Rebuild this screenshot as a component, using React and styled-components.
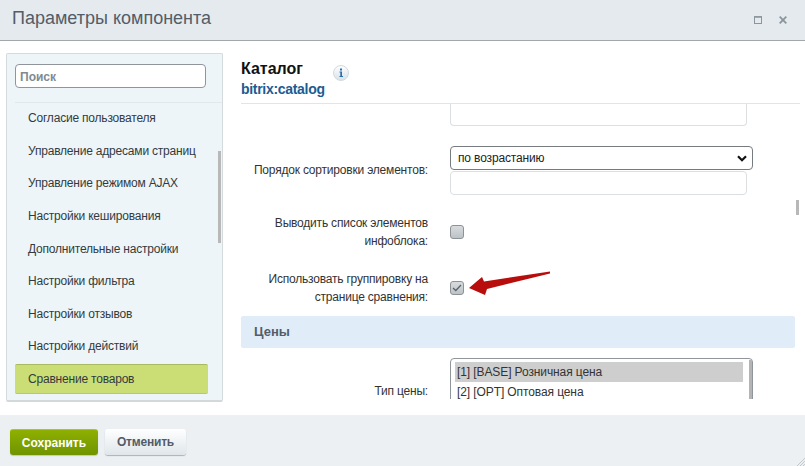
import React from "react";
import styled, { createGlobalStyle } from "styled-components";

const Global = createGlobalStyle`
  html, body { margin: 0; padding: 0; }
  body {
    width: 805px;
    height: 466px;
    overflow: hidden;
    background: #fff;
    font-family: "Liberation Sans", Arial, sans-serif;
  }
`;

const Dialog = styled.div`
  position: relative;
  width: 805px;
  height: 466px;
  display: flex;
  flex-direction: column;
`;

const Header = styled.header`
  height: 40px;
  flex: none;
  display: flex;
  align-items: center;
  padding: 0 18px 0 12px;
  background: #e4eaed;
  border-bottom: 1px solid #a3a7a9;
`;

const Title = styled.h1`
  flex: 1;
  margin: 0 0 3px;
  font-size: 18px;
  font-weight: normal;
  color: #535c69;
`;

const HeaderIcons = styled.div`
  display: flex;
  align-items: center;
  gap: 17px;
`;

const Body = styled.div`
  flex: 1;
  min-height: 0;
  display: flex;
  padding: 12px 5px 13px 6px;
`;

const Sidebar = styled.aside`
  position: relative;
  flex: none;
  width: 217px;
  height: 349px;
  padding: 10px 0 0 8px;
  background: #eef5f9;
  border: 1px solid #d5dadc;
  border-bottom: 2px solid #d3d8da;
  box-sizing: border-box;
  border-radius: 2px;
  overflow: hidden;
`;

const Search = styled.div`
  width: 191px;
  height: 24px;
  box-sizing: border-box;
  padding: 1px 0 0 4px;
  display: flex;
  align-items: center;
  background: #fff;
  border: 1px solid #8f959b;
  border-radius: 4px;
  font-size: 12px;
  font-weight: bold;
  color: #808a92;
`;

const SideLine = styled.div`
  height: 1px;
  margin: 14px 0 0 0;
  background: #e2e8eb;
`;

const SideList = styled.ul`
  list-style: none;
  margin: -1px 0 0;
  padding: 0;
`;

const SideItem = styled.li`
  width: 193px;
  height: ${(p) => (p.$active ? "30px" : "32.6px")};
  margin-top: ${(p) => (p.$active ? "1px" : "0")};
  box-sizing: border-box;
  padding-left: 13px;
  display: flex;
  align-items: center;
  font-size: 12px;
  letter-spacing: -0.2px;
  color: #333b40;
  background: ${(p) => (p.$active ? "#cbde75" : "transparent")};
  border-top: ${(p) => (p.$active ? "1px solid #a9b961" : "none")};
  border-bottom: ${(p) => (p.$active ? "1px solid #b8ca68" : "none")};
  border-radius: 2px;
`;

const SideThumb = styled.div`
  position: absolute;
  left: 211px;
  top: 97px;
  width: 3px;
  height: 92px;
  background: #b8b8b8;
`;

const Main = styled.main`
  position: relative;
  flex: 1;
  min-width: 0;
  padding-left: 18px;
  display: flex;
  flex-direction: column;
`;

const Head = styled.div`
  height: 51px;
  flex: none;
  box-sizing: border-box;
  padding-top: 7px;
  border-bottom: 1px solid #e2e5e7;
`;

const CompName = styled.div`
  display: flex;
  align-items: flex-start;
  gap: 30px;
  font-size: 16px;
  line-height: 18px;
  font-weight: bold;
  color: #111;

  svg {
    margin-top: 5px;
  }
`;

const CompCode = styled.div`
  font-size: 14px;
  line-height: 17px;
  font-weight: bold;
  letter-spacing: -0.3px;
  color: #1c5c92;
`;

const Scroller = styled.div`
  height: 295px;
  width: 554px;
  overflow: hidden;
`;

const Row = styled.div`
  display: flex;
  align-items: ${(p) => p.$align || "center"};
  margin-top: ${(p) => p.$top || 0}px;
`;

const Label = styled.div`
  flex: none;
  width: 187px;
  padding-left: 8px;
  padding-top: ${(p) => p.$pad || 0}px;
  box-sizing: border-box;
  margin-right: 22px;
  text-align: right;
  font-size: 12px;
  line-height: 18px;
  letter-spacing: -0.2px;
  color: #333;
`;

const Controls = styled.div`
  display: flex;
  flex-direction: column;
  gap: 1px;
`;

const TextField = styled.div`
  width: 297px;
  height: 24px;
  box-sizing: border-box;
  border: 1px solid #dcdfe2;
  border-radius: 4px;
  background: #fff;
`;

const ClippedField = styled(TextField)`
  height: 22px;
  border-top: none;
  border-radius: 0 0 4px 4px;
`;

const SelectBox = styled.div`
  width: 303px;
  height: 24px;
  box-sizing: border-box;
  padding: 0 5px 0 7px;
  display: flex;
  align-items: center;
  justify-content: space-between;
  border: 1px solid #767b80;
  border-radius: 4px;
  background: #fff;
  font-size: 12px;
  letter-spacing: -0.15px;
  color: #222;
`;

const CheckBox = styled.div`
  width: 14px;
  height: 14px;
  margin-top: -1px;
  box-sizing: border-box;
  display: flex;
  align-items: center;
  justify-content: center;
  border: 1px solid #8d9296;
  border-radius: 3px;
  background: linear-gradient(#d8dcdf, #bcc2c6);
`;

const Band = styled.div`
  height: 32px;
  margin-top: 10px;
  box-sizing: border-box;
  padding: 0 0 2px 13px;
  display: flex;
  align-items: center;
  background: #e0ecf8;
  border-radius: 2px;
  font-size: 13px;
  font-weight: bold;
  color: #535c69;
`;

const ListBox = styled.div`
  position: relative;
  width: 303px;
  height: 60px;
  box-sizing: border-box;
  padding: 3px 0 0 4px;
  border: 1px solid #8f959b;
  border-radius: 4px;
  font-size: 12px;
  letter-spacing: -0.1px;
  color: #333;
`;

const ListOption = styled.div`
  width: 288px;
  height: ${(p) => (p.$selected ? "20px" : "18px")};
  margin-bottom: 1px;
  padding-left: 2px;
  box-sizing: border-box;
  line-height: ${(p) => (p.$selected ? "20px" : "18px")};
  background: ${(p) => (p.$selected ? "#cecece" : "transparent")};
`;

const ListThumb = styled.div`
  position: absolute;
  right: 0;
  top: 1px;
  width: 3px;
  height: 56px;
  background: #b4b4b4;
`;

const MainThumb = styled.div`
  position: absolute;
  right: 1px;
  top: 147px;
  width: 3px;
  height: 15px;
  background: #b8b8b8;
`;

const ArrowMark = styled.svg`
  position: absolute;
  left: 467px;
  top: 269px;
`;

const Footer = styled.footer`
  height: 51px;
  flex: none;
  box-sizing: border-box;
  padding: 14px 0 0 10px;
  display: flex;
  align-items: flex-start;
  gap: 7px;
  background: #ecf0f3;
`;

const SaveButton = styled.button`
  width: 88px;
  height: 26px;
  padding: 0;
  border: none;
  border-top: 1px solid #b4c800;
  border-radius: 3px;
  background: linear-gradient(#8fb000, #6f9400);
  box-shadow: 0 1px 1px #c2cabc;
  font: bold 12px "Liberation Sans", Arial, sans-serif;
  color: #fff;
`;

const CancelButton = styled.button`
  width: 81px;
  height: 26px;
  padding: 0;
  border: none;
  border-radius: 3px;
  background: linear-gradient(#ffffff, #dfe6ea);
  box-shadow: 0 1px 1px #a9b2b8;
  font: bold 12px "Liberation Sans", Arial, sans-serif;
  letter-spacing: -0.2px;
  color: #535c69;
`;

const Grip = styled.svg`
  position: absolute;
  right: 0;
  bottom: 0;
`;

const sections = [
  "Согласие пользователя",
  "Управление адресами страниц",
  "Управление режимом AJAX",
  "Настройки кеширования",
  "Дополнительные настройки",
  "Настройки фильтра",
  "Настройки отзывов",
  "Настройки действий",
];

const InfoIcon = () => (
  <svg width="16" height="16" viewBox="0 0 16 16">
    <defs>
      <linearGradient id="infoBg" x1="0" y1="0" x2="0" y2="1">
        <stop offset="0" stopColor="#ffffff" />
        <stop offset="1" stopColor="#d6e2ea" />
      </linearGradient>
    </defs>
    <circle cx="8" cy="8" r="7.5" fill="url(#infoBg)" stroke="#d3dadf" />
    <rect x="7" y="3.5" width="2" height="2" fill="#2f6fa8" />
    <path d="M6.5 6.5H9V11H10V12H6.5V11H7.3V7.5H6.5Z" fill="#2f6fa8" />
  </svg>
);

const App = () => {
  return (
    <>
      <Global />
      <Dialog>
        <Header>
          <Title>Параметры компонента</Title>
          <HeaderIcons>
            <svg width="8" height="8" viewBox="0 0 8 8">
              <rect x="0.5" y="1" width="7" height="6.500" fill="none" stroke="#8b959c" />
              <path d="M0 0.800H8" stroke="#8b959c" strokeWidth="1.400" />
            </svg>
            <svg width="8" height="8" viewBox="0 0 8 8">
              <path d="M0.700 0.700L7.300 7.300M7.300 0.700L0.700 7.300" stroke="#8b959c" strokeWidth="1.800" />
            </svg>
          </HeaderIcons>
        </Header>

        <Body>
          <Sidebar>
            <Search>Поиск</Search>
            <SideLine />
            <SideList>
              {sections.map((name) => (
                <SideItem key={name}>{name}</SideItem>
              ))}
              <SideItem $active>Сравнение товаров</SideItem>
            </SideList>
            <SideThumb />
          </Sidebar>

          <Main>
            <Head>
              <CompName>
                Каталог
                <InfoIcon />
              </CompName>
              <CompCode>bitrix:catalog</CompCode>
            </Head>
            <Scroller>
              <Row>
                <Label />
                <ClippedField />
              </Row>
              <Row $top={20} $align="flex-start">
                <Label $pad={15}>Порядок сортировки элементов:</Label>
                <Controls>
                  <SelectBox>
                    по возрастанию
                    <svg width="10" height="7" viewBox="0 0 10 7">
                      <path d="M1 1.200L5 5.200L9 1.200" fill="none" stroke="#111" strokeWidth="2.200" />
                    </svg>
                  </SelectBox>
                  <TextField />
                </Controls>
              </Row>
              <Row $top={19}>
                <Label>Выводить список элементов инфоблока:</Label>
                <CheckBox />
              </Row>
              <Row $top={20}>
                <Label>Использовать группировку на странице сравнения:</Label>
                <CheckBox>
                  <svg width="10" height="8" viewBox="0 0 10 8">
                    <path d="M1 4L3.800 6.500L9 1" fill="none" stroke="#5c6266" strokeWidth="1.300" />
                  </svg>
                </CheckBox>
              </Row>
              <Band>Цены</Band>
              <Row $top={10} $align="flex-start">
                <Label $pad={24}>Тип цены:</Label>
                <ListBox>
                  <ListOption $selected>[1] [BASE] Розничная цена</ListOption>
                  <ListOption>[2] [OPT] Оптовая цена</ListOption>
                  <ListThumb />
                </ListBox>
              </Row>
            </Scroller>
            <MainThumb />
          </Main>
        </Body>

        <Footer>
          <SaveButton>Сохранить</SaveButton>
          <CancelButton>Отменить</CancelButton>
        </Footer>

        <ArrowMark width="86" height="30" viewBox="0 0 86 30">
          <path d="M2 19L15 8L17 12.500L83 2.500L83 4.500L20 20L18 26Z" fill="#b80d0d" />
        </ArrowMark>

        <Grip width="8" height="8" viewBox="0 0 8 8">
          <path d="M0 8L8 0M3 8L8 3M6 8L8 6" stroke="#c3c8cc" strokeWidth="1" />
        </Grip>
      </Dialog>
    </>
  );
};

export default App;
